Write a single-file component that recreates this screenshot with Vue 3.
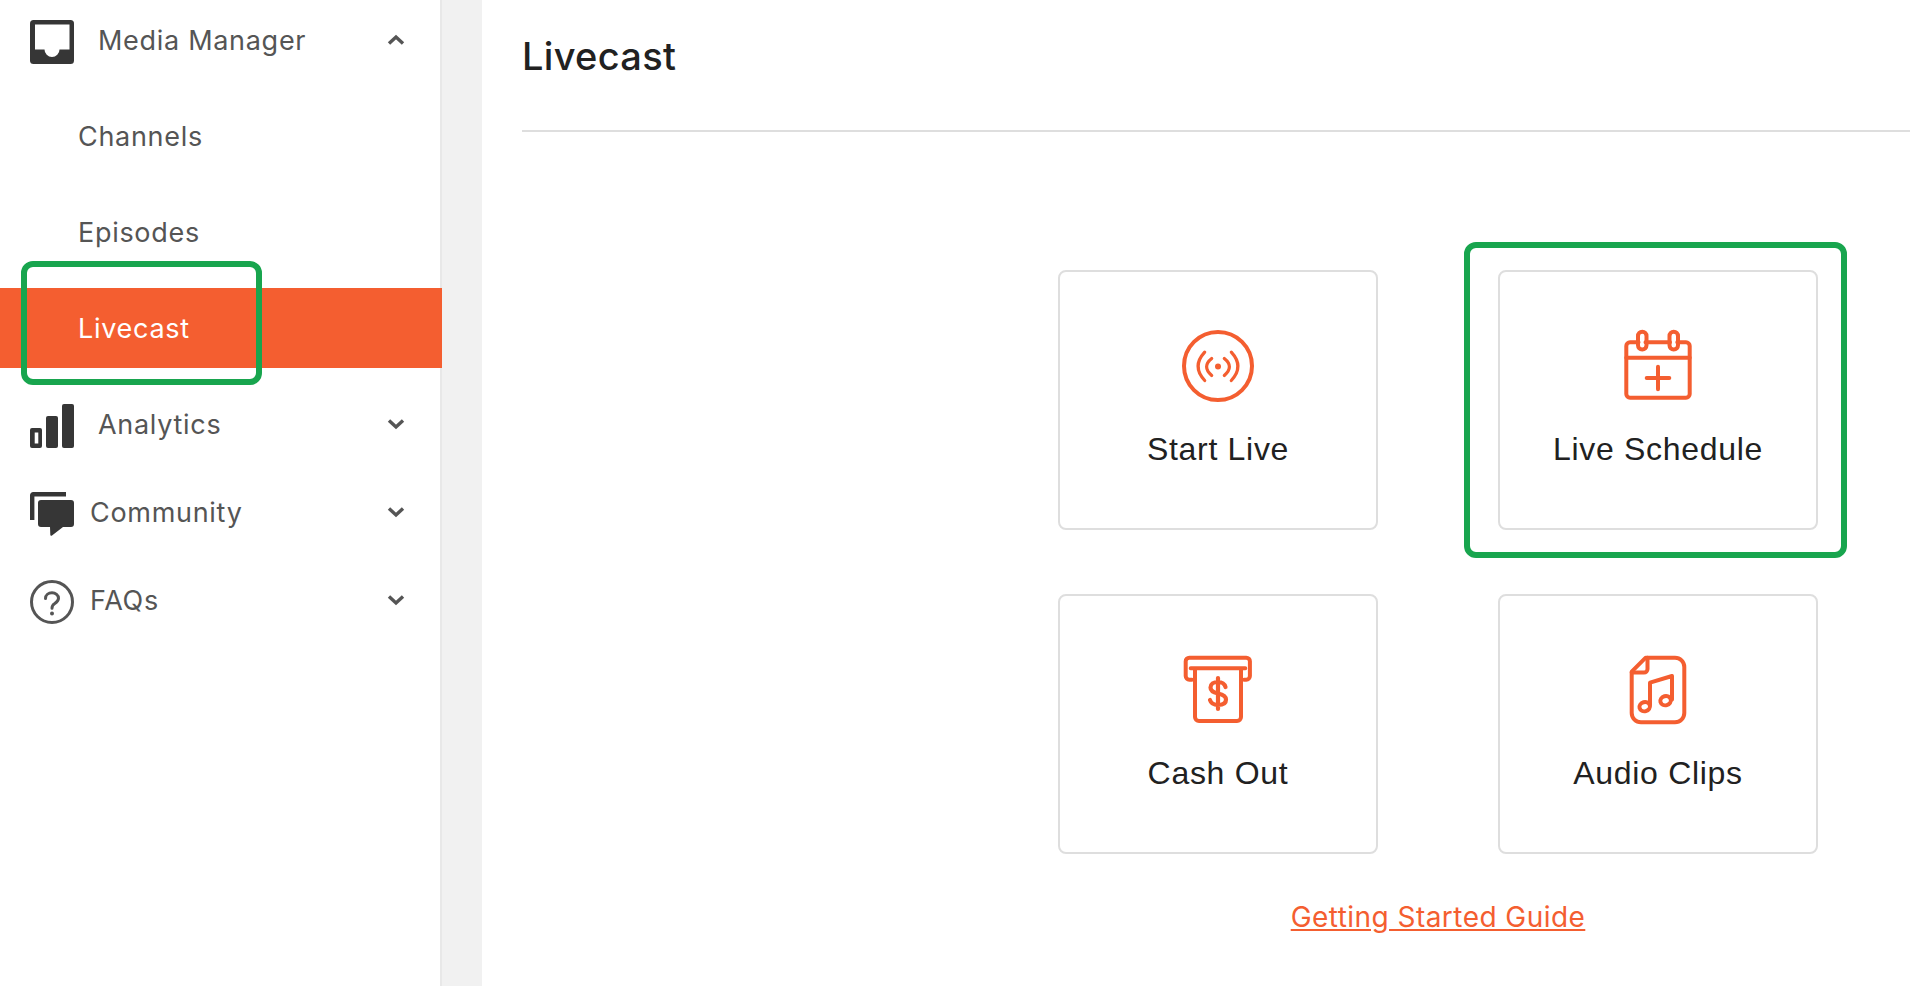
<script setup>
const subItems = [
  { label: 'Channels' },
  { label: 'Episodes' },
  { label: 'Livecast', active: true },
]
const cards = [
  { label: 'Start Live', icon: 'live' },
  { label: 'Live Schedule', icon: 'calendar', marked: true },
  { label: 'Cash Out', icon: 'cash' },
  { label: 'Audio Clips', icon: 'audio' },
]
</script>

<template>
  <div class="page">
    <aside class="sidebar">
      <div class="nav-row">
        <svg class="nav-icon" viewBox="0 0 44 44">
          <rect width="44" height="44" rx="3.5" fill="#363636" />
          <path d="M5 4.5H39.5V29.5H29.5a7.5 7.5 0 0 1-15 0H5Z" fill="#fff" />
        </svg>
        <span class="nav-label wide">Media Manager</span>
        <svg class="chevron" viewBox="0 0 18 12"><path d="M2 9.5L9 3l7 6.5" /></svg>
      </div>

      <div
        v-for="item in subItems"
        :key="item.label"
        class="sub-row"
        :class="{ active: item.active }"
      >
        {{ item.label }}
        <span v-if="item.active" class="mark mark-nav"></span>
      </div>

      <div class="nav-row first-after-sub">
        <svg class="nav-icon" viewBox="0 0 44 44" fill="#363636">
          <path fill-rule="evenodd" d="M2 24h8a2 2 0 0 1 2 2v16a2 2 0 0 1-2 2H2a2 2 0 0 1-2-2V26a2 2 0 0 1 2-2Zm2.7 4.5v11h3.6v-11Z" />
          <rect x="16" y="12" width="12" height="32" rx="2" />
          <rect x="32" y="0" width="12" height="44" rx="2" />
        </svg>
        <span class="nav-label wide">Analytics</span>
        <svg class="chevron" viewBox="0 0 18 12"><path d="M2 2.5L9 9l7-6.5" /></svg>
      </div>

      <div class="nav-row">
        <svg class="nav-icon" viewBox="0 0 44 44" fill="#363636">
          <path d="M36 2.2H3.2a1 1 0 0 0-1 1V28" fill="none" stroke="#363636" stroke-width="4.4" />
          <path d="M11 8h30a3 3 0 0 1 3 3v21a3 3 0 0 1-3 3H33L22 43.5a1 1 0 0 1-1.7-.8L20 35h-9a3 3 0 0 1-3-3V11a3 3 0 0 1 3-3Z" />
        </svg>
        <span class="nav-label">Community</span>
        <svg class="chevron" viewBox="0 0 18 12"><path d="M2 2.5L9 9l7-6.5" /></svg>
      </div>

      <div class="nav-row">
        <svg class="nav-icon" viewBox="0 0 44 44" fill="none" stroke="#555" stroke-width="3">
          <circle cx="22" cy="22" r="20.5" />
          <path d="M15.5 18.5c0-3.4 3-5.7 6.5-5.7s6.5 2.3 6.5 5.5c0 3-2 4.2-4 5.4-1.9 1.1-2.5 2.2-2.5 4.6" stroke-linecap="round" />
          <circle cx="22" cy="33.6" r="2" fill="#555" stroke="none" />
        </svg>
        <span class="nav-label">FAQs</span>
        <svg class="chevron" viewBox="0 0 18 12"><path d="M2 2.5L9 9l7-6.5" /></svg>
      </div>
    </aside>

    <div class="gutter"></div>

    <main class="main">
      <h1 class="title">Livecast</h1>

      <div class="content">
        <div class="card-grid">
          <div v-for="card in cards" :key="card.label" class="card">
            <svg class="card-icon" viewBox="0 0 80 80">
              <g v-if="card.icon === 'live'">
                <circle cx="40" cy="40" r="34" />
                <path d="M26.7 26.2Q13.5 40.5 26.7 54.5M53.3 26.2Q66.5 40.5 53.3 54.5M33.7 32.5Q23.5 40.5 33.7 49.5M46.3 32.5Q56.5 40.5 46.3 49.5" stroke-width="3.2" />
                <circle cx="40" cy="40.5" r="3" class="solid" />
              </g>
              <g v-else-if="card.icon === 'calendar'">
                <path d="M27.5 16.3H52M20.5 16.3H12a3.7 3.7 0 0 0-3.7 3.7v48a3.7 3.7 0 0 0 3.7 3.7h56a3.7 3.7 0 0 0 3.7-3.7V20a3.7 3.7 0 0 0-3.7-3.7h-8.7" />
                <rect x="20" y="5.7" width="8.5" height="17.8" rx="4.2" />
                <rect x="51.5" y="5.7" width="8.5" height="17.8" rx="4.2" />
                <path d="M8.3 31.7H71.7M28.7 52H51.3M40 40.7V63.3" />
              </g>
              <g v-else-if="card.icon === 'cash'">
                <path d="M14 29.7h-2.7a3.6 3.6 0 0 1-3.6-3.6V11.3a3.6 3.6 0 0 1 3.6-3.6h57a3.6 3.6 0 0 1 3.6 3.6v14.8a3.6 3.6 0 0 1-3.6 3.6H66" />
                <path d="M12.7 18.3H67.3M17 18.3V67a4 4 0 0 0 4 4h38a4 4 0 0 0 4-4V18.3" />
                <path d="M47.5 37C46.5 33.5 44 32 40 32 35.5 32 32.5 34 32.5 37.5 32.5 41 35.5 42.5 40 43.5 44.5 44.5 48 46 48 49.5 48 53 45 55 40 55 35.5 55 33 53.5 32 50M40 28V59" stroke-width="4.2" />
              </g>
              <g v-else>
                <path d="M27.7 7.7H57a9.3 9.3 0 0 1 9.3 9.3v46a9.3 9.3 0 0 1-9.3 9.3H23a9.3 9.3 0 0 1-9.3-9.3V21.7Z" />
                <path d="M29.5 7.7V19a3.5 3.5 0 0 1-3.5 3.5H13.7" />
                <path d="M32 55V32.7L54 26V49.5" />
                <ellipse cx="26.7" cy="56.7" rx="5.3" ry="4.6" transform="rotate(-15 26.7 56.7)" />
                <ellipse cx="47.6" cy="50.7" rx="5.3" ry="4.6" transform="rotate(-15 47.6 50.7)" />
              </g>
            </svg>
            <span class="card-label">{{ card.label }}</span>
            <span v-if="card.marked" class="mark mark-card"></span>
          </div>
        </div>
        <a class="guide" href="#">Getting Started Guide</a>
      </div>
    </main>
  </div>
</template>

<style scoped>
.page {
  display: flex;
  width: 1910px;
  height: 986px;
  overflow: hidden;
  background: #fff;
  font-family: Inter, "Liberation Sans", sans-serif;
}

.sidebar {
  width: 442px;
  flex: none;
  box-sizing: border-box;
  border-right: 2px solid #e8e8e8;
  background: #fff;
  display: flex;
  flex-direction: column;
}

.nav-row {
  position: relative;
  height: 80px;
  flex: none;
  box-sizing: border-box;
  padding-left: 30px;
  margin-bottom: 8px;
  display: flex;
  align-items: center;
  color: #555;
  font-size: 27px;
  letter-spacing: 0.7px;
}

.first-after-sub {
  margin-top: 8px;
}

.nav-icon {
  width: 44px;
  height: 44px;
  flex: none;
  margin-top: 4px;
  margin-right: 16px;
}

.nav-label.wide {
  margin-left: 8px;
}

.chevron {
  position: absolute;
  left: 387px;
  width: 18px;
  height: 12px;
  fill: none;
  stroke: #555;
  stroke-width: 3.4;
}

.sub-row {
  position: relative;
  height: 80px;
  flex: none;
  margin-top: 8px;
  margin-bottom: 8px;
  margin-right: -2px;
  padding-left: 78px;
  display: flex;
  align-items: center;
  color: #555;
  font-size: 27px;
  letter-spacing: 0.7px;
}

.sub-row.active {
  background: #f45e30;
  color: #fff;
}

.gutter {
  width: 40px;
  flex: none;
  background: #f1f1f1;
}

.main {
  flex: 1;
  min-width: 0;
  padding-left: 40px;
}

.title {
  margin: 0;
  height: 132px;
  box-sizing: border-box;
  border-bottom: 2px solid #dedede;
  padding-top: 32px;
  font-size: 38px;
  line-height: 48px;
  font-weight: 500;
  letter-spacing: 0.3px;
  color: #212121;
}

.content {
  padding-top: 138px;
  padding-left: 536px;
  width: 760px;
  display: flex;
  flex-direction: column;
  align-items: center;
}

.card-grid {
  display: grid;
  grid-template-columns: 320px 320px;
  grid-auto-rows: 260px;
  column-gap: 120px;
  row-gap: 64px;
}

.card {
  position: relative;
  box-sizing: border-box;
  border: 2px solid #dedede;
  border-radius: 8px;
  padding-top: 54px;
  display: flex;
  flex-direction: column;
  align-items: center;
}

.card-icon {
  width: 80px;
  height: 80px;
  fill: none;
  stroke: #f45e30;
  stroke-width: 4;
  stroke-linecap: round;
  stroke-linejoin: round;
}

.solid {
  fill: #f45e30;
  stroke: none;
}

.card-label {
  margin-top: 23px;
  font-family: "Liberation Sans", Arial, sans-serif;
  font-size: 32px;
  line-height: 40px;
  letter-spacing: 0.7px;
  color: #212121;
}

.guide {
  margin-top: 46px;
  font-size: 28px;
  line-height: 34px;
  letter-spacing: 0.45px;
  color: #f45e30;
  text-decoration: underline;
}

.mark {
  position: absolute;
  box-sizing: border-box;
  border: 6px solid #18a54e;
  border-radius: 12px;
  pointer-events: none;
}

.mark-nav {
  left: 21px;
  top: -27px;
  width: 241px;
  height: 124px;
}

.mark-card {
  left: -36px;
  top: -30px;
  width: 383px;
  height: 316px;
}
</style>

<style>
html,
body {
  margin: 0;
  background: #fff;
}
</style>
